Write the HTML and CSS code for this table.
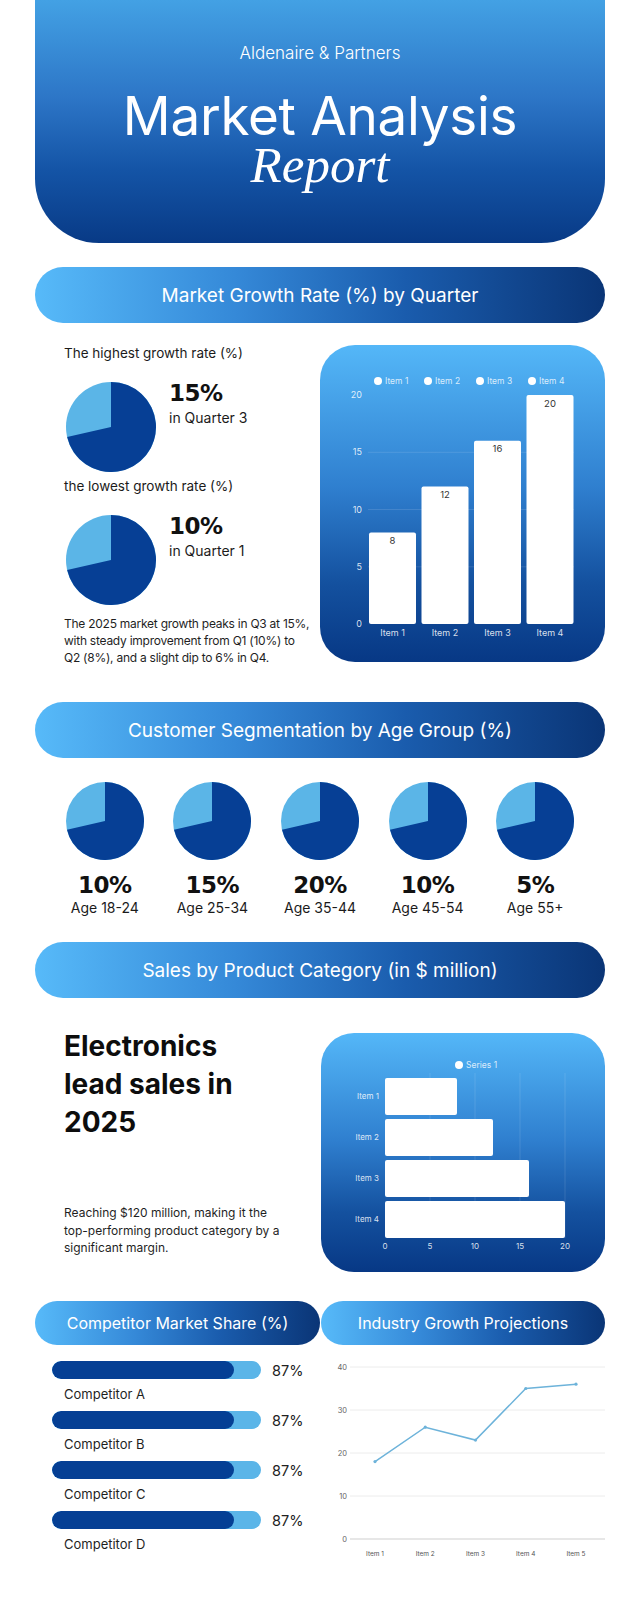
FILE: index.html
```html
<!DOCTYPE html>
<html lang="en">
<head>
<meta charset="utf-8">
<title>Market Analysis Report</title>
<link rel="stylesheet" href="styles.css">
</head>
<body>
<div class="page">
  <header class="hero">
    <p class="brand">Aldenaire &amp; Partners</p>
    <h1 class="title">Market Analysis</h1>
    <p class="subtitle">Report</p>
  </header>

  <h2 class="band band-first">Market Growth Rate (%) by Quarter</h2>
  <section class="growth">
    <div class="growth-text">
      <p class="label">The highest growth rate (%)</p>
      <div class="stat">
        <svg class="pie pie-lg" viewBox="-45 -45 90 90"><circle class="pie-light" r="45"/><path class="pie-dark" d="M0,0 L0,-45 A45,45 0 1 1 -43.85,10.12 Z"/></svg>
        <div class="stat-text"><p class="big">15%</p><p class="sub">in Quarter 3</p></div>
      </div>
      <p class="label label-2">the lowest growth rate (%)</p>
      <div class="stat">
        <svg class="pie pie-lg" viewBox="-45 -45 90 90"><circle class="pie-light" r="45"/><path class="pie-dark" d="M0,0 L0,-45 A45,45 0 1 1 -43.85,10.12 Z"/></svg>
        <div class="stat-text"><p class="big">10%</p><p class="sub">in Quarter 1</p></div>
      </div>
      <p class="note note-growth">The 2025 market growth peaks in Q3 at 15%,<br>with steady improvement from Q1 (10%) to<br>Q2 (8%), and a slight dip to 6% in Q4.</p>
    </div>
    <div class="card card-growth">
      <svg class="chart" viewBox="0 0 285 310" width="285" height="310">
        <g class="legend">
          <circle cx="58" cy="36" r="4"/><text x="65" y="39">Item 1</text>
          <circle cx="108" cy="36" r="4"/><text x="115" y="39">Item 2</text>
          <circle cx="160" cy="36" r="4"/><text x="167" y="39">Item 3</text>
          <circle cx="212" cy="36" r="4"/><text x="219" y="39">Item 4</text>
        </g>
        <g class="grid">
          <line x1="48" x2="254" y1="107.3" y2="107.3"/>
          <line x1="48" x2="254" y1="164.5" y2="164.5"/>
          <line x1="48" x2="254" y1="221.8" y2="221.8"/>
        </g>
        <g class="axis-text">
          <text x="42" y="53" text-anchor="end">20</text>
          <text x="42" y="110" text-anchor="end">15</text>
          <text x="42" y="168" text-anchor="end">10</text>
          <text x="42" y="225" text-anchor="end">5</text>
          <text x="42" y="282" text-anchor="end">0</text>
        </g>
        <g class="bars">
          <rect x="49" y="187.4" width="47" height="91.6" rx="2"/>
          <rect x="101.5" y="141.6" width="47" height="137.4" rx="2"/>
          <rect x="154" y="95.8" width="47" height="183.2" rx="2"/>
          <rect x="206.5" y="50" width="47" height="229" rx="2"/>
        </g>
        <g class="values">
          <text x="72.5" y="199">8</text>
          <text x="125" y="153">12</text>
          <text x="177.5" y="107">16</text>
          <text x="230" y="62">20</text>
        </g>
        <g class="axis-text" text-anchor="middle">
          <text x="72.5" y="291">Item 1</text>
          <text x="125" y="291">Item 2</text>
          <text x="177.5" y="291">Item 3</text>
          <text x="230" y="291">Item 4</text>
        </g>
      </svg>
    </div>
  </section>

  <h2 class="band band-age">Customer Segmentation by Age Group (%)</h2>
  <section class="ages">
    <div class="age">
      <svg class="pie pie-sm" viewBox="-45 -45 90 90"><circle class="pie-light" r="45"/><path class="pie-dark" d="M0,0 L0,-45 A45,45 0 1 1 -43.85,10.12 Z"/></svg>
      <p class="big age-num">10%</p><p class="age-label">Age 18-24</p>
    </div>
    <div class="age">
      <svg class="pie pie-sm" viewBox="-45 -45 90 90"><circle class="pie-light" r="45"/><path class="pie-dark" d="M0,0 L0,-45 A45,45 0 1 1 -43.85,10.12 Z"/></svg>
      <p class="big age-num">15%</p><p class="age-label">Age 25-34</p>
    </div>
    <div class="age">
      <svg class="pie pie-sm" viewBox="-45 -45 90 90"><circle class="pie-light" r="45"/><path class="pie-dark" d="M0,0 L0,-45 A45,45 0 1 1 -43.85,10.12 Z"/></svg>
      <p class="big age-num">20%</p><p class="age-label">Age 35-44</p>
    </div>
    <div class="age">
      <svg class="pie pie-sm" viewBox="-45 -45 90 90"><circle class="pie-light" r="45"/><path class="pie-dark" d="M0,0 L0,-45 A45,45 0 1 1 -43.85,10.12 Z"/></svg>
      <p class="big age-num">10%</p><p class="age-label">Age 45-54</p>
    </div>
    <div class="age">
      <svg class="pie pie-sm" viewBox="-45 -45 90 90"><circle class="pie-light" r="45"/><path class="pie-dark" d="M0,0 L0,-45 A45,45 0 1 1 -43.85,10.12 Z"/></svg>
      <p class="big age-num">5%</p><p class="age-label">Age 55+</p>
    </div>
  </section>

  <h2 class="band band-sales">Sales by Product Category (in $ million)</h2>
  <section class="sales">
    <div class="sales-text">
      <h3 class="headline">Electronics<br>lead sales in<br>2025</h3>
      <p class="note note-sales">Reaching $120 million, making it the<br>top-performing product category by a<br>significant margin.</p>
    </div>
    <div class="card card-sales">
      <svg class="chart" viewBox="0 0 284 239" width="284" height="239">
        <g class="legend">
          <circle cx="138" cy="32" r="4"/><text x="145" y="35">Series 1</text>
        </g>
        <g class="grid">
          <line x1="109" x2="109" y1="40" y2="205"/>
          <line x1="154" x2="154" y1="40" y2="205"/>
          <line x1="199" x2="199" y1="40" y2="205"/>
          <line x1="244" x2="244" y1="40" y2="205"/>
        </g>
        <g class="bars">
          <rect x="64" y="45" width="72" height="37" rx="2"/>
          <rect x="64" y="86" width="108" height="37" rx="2"/>
          <rect x="64" y="127" width="144" height="37" rx="2"/>
          <rect x="64" y="168" width="180" height="37" rx="2"/>
        </g>
        <g class="axis-text small" text-anchor="end">
          <text x="58" y="66">Item 1</text>
          <text x="58" y="107">Item 2</text>
          <text x="58" y="148">Item 3</text>
          <text x="58" y="189">Item 4</text>
        </g>
        <g class="axis-text small" text-anchor="middle">
          <text x="64" y="216">0</text>
          <text x="109" y="216">5</text>
          <text x="154" y="216">10</text>
          <text x="199" y="216">15</text>
          <text x="244" y="216">20</text>
        </g>
      </svg>
    </div>
  </section>

  <section class="duo">
    <div class="duo-col">
      <h2 class="band band-small">Competitor Market Share (%)</h2>
      <ul class="competitors">
        <li class="comp">
          <div class="comp-row"><div class="track"><div class="fill" style="width:87%"></div></div><span class="pct">87%</span></div>
          <p class="comp-name">Competitor A</p>
        </li>
        <li class="comp">
          <div class="comp-row"><div class="track"><div class="fill" style="width:87%"></div></div><span class="pct">87%</span></div>
          <p class="comp-name">Competitor B</p>
        </li>
        <li class="comp">
          <div class="comp-row"><div class="track"><div class="fill" style="width:87%"></div></div><span class="pct">87%</span></div>
          <p class="comp-name">Competitor C</p>
        </li>
        <li class="comp">
          <div class="comp-row"><div class="track"><div class="fill" style="width:87%"></div></div><span class="pct">87%</span></div>
          <p class="comp-name">Competitor D</p>
        </li>
      </ul>
    </div>
    <div class="duo-col">
      <h2 class="band band-small">Industry Growth Projections</h2>
      <svg class="line-chart" viewBox="0 0 284 210" width="284" height="210">
        <g class="lgrid">
          <line x1="29" x2="284" y1="12" y2="12"/>
          <line x1="29" x2="284" y1="55" y2="55"/>
          <line x1="29" x2="284" y1="98" y2="98"/>
          <line x1="29" x2="284" y1="141" y2="141"/>
        </g>
        <line class="laxis" x1="29" x2="284" y1="184" y2="184"/>
        <g class="ltext" text-anchor="end">
          <text x="26" y="14.5">40</text>
          <text x="26" y="57.5">30</text>
          <text x="26" y="100.5">20</text>
          <text x="26" y="143.5">10</text>
          <text x="26" y="186.5">0</text>
        </g>
        <polyline class="lline" points="54,106.6 104.25,72.2 154.5,85.1 204.75,33.5 255,29.2"/>
        <g class="ldots">
          <circle cx="54" cy="106.6" r="1.6"/>
          <circle cx="104.25" cy="72.2" r="1.6"/>
          <circle cx="154.5" cy="85.1" r="1.6"/>
          <circle cx="204.75" cy="33.5" r="1.6"/>
          <circle cx="255" cy="29.2" r="1.6"/>
        </g>
        <g class="ltext ltext-x" text-anchor="middle">
          <text x="54" y="201">Item 1</text>
          <text x="104.25" y="201">Item 2</text>
          <text x="154.5" y="201">Item 3</text>
          <text x="204.75" y="201">Item 4</text>
          <text x="255" y="201">Item 5</text>
        </g>
      </svg>
    </div>
  </section>
</div>
</body>
</html>
```

FILE: styles.css
```css
* {
  box-sizing: border-box;
  margin: 0;
  padding: 0;
}

body {
  background: #ffffff;
  font-family: Inter, "Liberation Sans", sans-serif;
  color: #1b1b1b;
}

.page {
  width: 640px;
  padding: 0 35px 40px;
}

/* Header */
.hero {
  height: 243px;
  border-radius: 0 0 64px 64px;
  background: linear-gradient(180deg, #43a1e4 0%, #2d76c7 40%, #1454a6 70%, #083a86 100%);
  color: #ffffff;
  text-align: center;
  padding-top: 42px;
}

.brand {
  font-size: 17px;
  font-weight: 300;
  line-height: 22px;
}

.title {
  font-size: 53px;
  font-weight: 400;
  line-height: 52px;
  margin-top: 25.5px;
  letter-spacing: -0.3px;
}

.subtitle {
  font-family: "Liberation Serif", serif;
  font-style: italic;
  font-size: 51px;
  line-height: 46px;
}

/* Bands */
.band {
  height: 56px;
  border-radius: 28px;
  background: linear-gradient(90deg, #57baf9 0%, #3589d8 35%, #1a5cad 65%, #0a3576 100%);
  color: #ffffff;
  font-size: 19px;
  font-weight: 400;
  display: flex;
  align-items: center;
  justify-content: center;
  white-space: nowrap;
}

.band-first {
  margin-top: 24px;
}

.band-age {
  margin-top: 36.5px;
}

.band-sales {
  margin-top: 25px;
}

.band-small {
  height: 44px;
  border-radius: 22px;
  font-size: 16px;
}

/* Pies */
.pie {
  display: block;
  flex: none;
}

.pie-light {
  fill: #5bb5e7;
}

.pie-dark {
  fill: #063f95;
}

.pie-lg {
  width: 90px;
  height: 90px;
  margin-left: 2px;
}

.pie-sm {
  width: 78px;
  height: 78px;
}

/* Growth section */
.growth {
  display: grid;
  grid-template-columns: 285px 285px;
  margin-top: 21px;
}

.growth-text {
  padding-left: 29px;
}

.label {
  font-size: 13.5px;
  line-height: 18px;
}

.label-2 {
  margin-top: 5px;
}

.stat {
  display: flex;
  align-items: flex-start;
  gap: 13px;
  margin-top: 20px;
}

.stat-text {
  margin-top: -3px;
}

.big {
  font-family: "DejaVu Sans", sans-serif;
  font-weight: 700;
  font-size: 23px;
  line-height: 28px;
  color: #111111;
  letter-spacing: -0.5px;
}

.sub {
  font-size: 14px;
  line-height: 18px;
  margin-top: 2px;
}

.note {
  font-size: 12px;
  line-height: 17px;
  color: #1f1f1f;
  white-space: nowrap;
}

.note-growth {
  margin-top: 9.5px;
  letter-spacing: -0.25px;
}

.card {
  border-radius: 35px;
  background: linear-gradient(180deg, #54b7f8 0%, #2f7fcf 45%, #14519f 75%, #073885 100%);
  overflow: hidden;
}

.card-growth {
  margin-top: 1px;
  height: 317px;
}

.chart {
  display: block;
}

.legend circle {
  fill: #ffffff;
}

.legend text {
  font-family: Inter, sans-serif;
  font-size: 8.5px;
  fill: rgba(255, 255, 255, 0.8);
}

.grid line {
  stroke: rgba(255, 255, 255, 0.12);
  stroke-width: 1;
}

.axis-text text {
  font-family: Inter, sans-serif;
  font-size: 9px;
  fill: rgba(255, 255, 255, 0.85);
}

.axis-text.small text {
  font-size: 8px;
}

.bars rect {
  fill: #ffffff;
}

.values text {
  font-family: Inter, sans-serif;
  font-size: 9.5px;
  fill: #333333;
  text-anchor: middle;
}

/* Ages */
.ages {
  display: grid;
  grid-template-columns: repeat(5, 1fr);
  padding: 0 16px;
  margin-top: 24px;
}

.age {
  display: flex;
  flex-direction: column;
  align-items: center;
}

.age-num {
  margin-top: 11px;
}

.age-label {
  font-size: 14px;
  line-height: 18px;
}

/* Sales */
.sales {
  display: grid;
  grid-template-columns: 286px 284px;
  margin-top: 29px;
}

.sales-text {
  padding-left: 29px;
}

.headline {
  font-size: 28px;
  font-weight: 700;
  line-height: 38px;
  color: #0d0d0d;
}

.note-sales {
  margin-top: 63px;
  line-height: 17.5px;
}

.card-sales {
  margin-top: 6px;
  height: 239px;
  border-radius: 33px;
}

/* Duo */
.duo {
  display: grid;
  grid-template-columns: 285px 284px;
  gap: 1px;
  margin-top: 29px;
}

.competitors {
  list-style: none;
  margin-top: 14px;
  padding-left: 17px;
}

.comp-row {
  display: flex;
  align-items: center;
  height: 22px;
  gap: 11px;
}

.track {
  width: 209px;
  height: 18px;
  border-radius: 9px;
  background: #5bb5e8;
  overflow: hidden;
}

.fill {
  height: 100%;
  border-radius: 9px;
  background: #053f94;
}

.pct {
  font-size: 14.5px;
  color: #222222;
}

.comp-name {
  font-size: 13px;
  line-height: 26px;
  margin-bottom: 2px;
  padding-left: 12px;
  color: #1f1f1f;
}

.line-chart {
  display: block;
  margin-top: 10px;
}

.lgrid line {
  stroke: #ececec;
  stroke-width: 1;
}

.laxis {
  stroke: #cfcfcf;
  stroke-width: 1;
}

.ltext text {
  font-family: Inter, sans-serif;
  font-size: 7.5px;
  fill: #666666;
}

.ltext-x text {
  font-size: 6.5px;
  fill: #555555;
}

.lline {
  fill: none;
  stroke: #6db3da;
  stroke-width: 1.5;
}

.ldots circle {
  fill: #6db3da;
}
```
